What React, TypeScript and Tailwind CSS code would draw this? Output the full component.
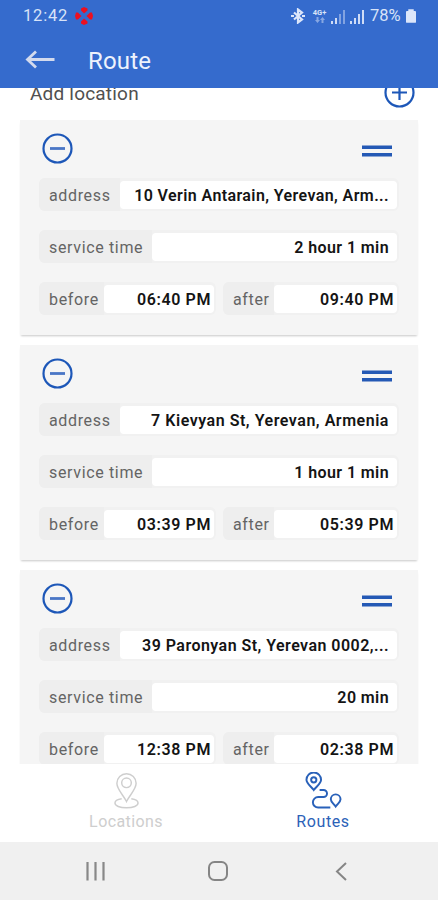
import React from 'react';

const stops = [
  { id: 1, address: '10 Verin Antarain, Yerevan, Arm...', addressTracking: 'tracking-[0.4px]', service: '2 hour 1 min', before: '06:40 PM', after: '09:40 PM' },
  { id: 2, address: '7 Kievyan St, Yerevan, Armenia', addressTracking: 'tracking-[0.53px]', service: '1 hour 1 min', before: '03:39 PM', after: '05:39 PM' },
  { id: 3, address: '39 Paronyan St, Yerevan 0002,...', addressTracking: 'tracking-[0.46px]', service: '20 min', before: '12:38 PM', after: '02:38 PM' },
];

const CircleIcon = ({ plus = false }: { plus?: boolean }) => (
  <svg className="h-[31px] w-[31px] shrink-0" viewBox="0 0 31 31" fill="none" stroke="#1d57b8">
    <circle cx="15.5" cy="15.5" r="14" strokeWidth="2.2" />
    <path d={plus ? 'M8 15.5h15M15.5 8v15' : 'M8 15.5h15'} strokeWidth={plus ? 2.2 : 2.8} stroke={plus ? '#1d57b8' : '#4a76c6'} />
  </svg>
);

type FieldProps = {
  label: string;
  value: string;
  labelWidth: string;
  className?: string;
  inset?: string;
  tracking?: string;
};

const Field = ({ label, value, labelWidth, className = '', inset = 'pr-2', tracking = 'tracking-[0.4px]' }: FieldProps) => (
  <div className={`flex h-[33px] items-center rounded-md bg-[#f1f1f1] pr-0.5 ${className}`}>
    <div className={`flex h-full shrink-0 items-center rounded-l-md bg-[#eeeeee] pt-[3px] pl-2.5 tracking-[0.65px] text-[#646464] ${labelWidth}`}>
      {label}
    </div>
    <div className={`flex h-7 flex-1 items-center justify-end rounded bg-white pt-[3px] font-semibold whitespace-nowrap text-[#141414] ${inset} ${tracking}`}>
      {value}
    </div>
  </div>
);

const SignalIcon = ({ faded = false }: { faded?: boolean }) => (
  <svg className="h-[15px] w-[14px]" viewBox="0 0 14 15" fill="#cfdcf6">
    <path d="M0 12h2v3H0zM4 9h2v6H4z" />
    <path d="M8 5h2v10H8zM12 1h2v14h-2z" opacity={faded ? 0.5 : 1} />
  </svg>
);

const StatusBar = () => (
  <div className="flex h-8 items-center pl-[23px] text-[16.5px] text-[#d8e3f8]">
    <span className="w-[46px] tracking-[0.8px]">12:42</span>
    <svg className="ml-[6px] h-[18px] w-[18px]" viewBox="0 0 18 18" fill="#ed1020">
      <path d="M6 1.500L9 0l3.500 1.500v2L9 6.500l-3-3zM6 16.500L9 18l3.500-1.500v-2L9 11.500l-3 3zM1 5.500h2L6.500 9 3 12.500H1L0 9zM17 5.500h-2L11.500 9l3.500 3.500h2L18 9z" />
    </svg>
    <div className="ml-auto flex items-center pr-[22px]">
      <svg className="h-4 w-[14px]" viewBox="0 0 14 16" fill="none" stroke="#dce6fa" strokeWidth="2.200">
        <path d="M3 4.500l8 7L7 14.500v-13l4 3-8 7" />
        <path d="M0 8h3M11 8h3" />
      </svg>
      <div className="ml-[7px] flex h-[15px] w-[15px] flex-col items-center">
        <span className="text-[7.5px] leading-[8px] font-bold">4G+</span>
        <svg className="h-[6px] w-[10px] opacity-50" viewBox="0 0 10 6" fill="currentColor">
          <path d="M2.500 6L0 3h1.500V0h2v3H5zM7.500 0L10 3H8.500v3h-2V3H5z" />
        </svg>
      </div>
      <div className="ml-1 flex gap-[5px]">
        <SignalIcon faded />
        <SignalIcon />
      </div>
      <span className="ml-[6px] w-[33px]">78%</span>
      <svg className="ml-[3px] h-[14px] w-[10px]" viewBox="0 0 11 15" fill="#dce6fa">
        <path d="M2.500 0h6v2H10a1 1 0 011 1v11a1 1 0 01-1 1H1a1 1 0 01-1-1V3a1 1 0 011-1h1.500z" />
      </svg>
    </div>
  </div>
);

export default function App() {
  return (
    <div className="flex h-[900px] w-[438px] flex-col overflow-hidden bg-white font-[Roboto,sans-serif]">
      {/* Header */}
      <header className="h-[88px] shrink-0 bg-[#356bcd]">
        <StatusBar />
        <div className="flex h-14 items-center pl-[25px]">
          <svg className="h-5 w-[30px]" viewBox="0 0 30 20" fill="none" stroke="#d3daed" strokeWidth="2.800">
            <path d="M29.500 9.500H2M11 1.500l-8.500 8 8.500 8" />
          </svg>
          <h1 className="ml-[33px] pt-px text-2xl tracking-[0.15px] text-[#edf2fc]">Route</h1>
        </div>
      </header>

      {/* Stop list, scrolled slightly under the header */}
      <main className="flex min-h-0 flex-1 flex-col overflow-hidden px-5">
        <div className="-mt-[11px] mb-[12px] flex h-[31px] shrink-0 items-center justify-between pr-[3px] pl-[10px]">
          <span className="pt-[3px] text-[19px] tracking-[0.2px] text-[#505050]">Add location</span>
          <CircleIcon plus />
        </div>
        <div className="flex flex-col gap-2.5">
          {stops.map((stop) => (
            <section
              key={stop.id}
              className="h-[215px] shrink-0 bg-[#f5f5f5] px-[19px] text-base shadow-[0_2px_2px_-1px_rgba(0,0,0,0.22)]"
            >
              <div className="flex h-[58px] items-center justify-between pr-[7px] pb-0.5 pl-[3px]">
                <CircleIcon />
                <svg className="mt-1.5 h-3 w-[30px]" viewBox="0 0 30 12" fill="#2459b5">
                  <path d="M0 0.500h30v3.500H0zM0 8h30v3.500H0z" />
                </svg>
              </div>
              <div className="flex flex-col gap-[19px]">
                <Field label="address" value={stop.address} labelWidth="w-[81px]" tracking={stop.addressTracking} />
                <Field label="service time" value={stop.service} labelWidth="w-[113px]" />
                <div className="flex justify-between">
                  <Field label="before" value={stop.before} labelWidth="w-[65px]" className="w-[177px]" inset="pr-[3px]" tracking="tracking-[0.6px]" />
                  <Field label="after" value={stop.after} labelWidth="w-[51px]" className="w-[176px]" inset="pr-[3px]" tracking="tracking-[0.6px]" />
                </div>
              </div>
            </section>
          ))}
        </div>
      </main>

      {/* Tabs */}
      <nav className="flex h-[78px] shrink-0 justify-center bg-white pl-[11px] text-base tracking-[0.4px]">
        <div className="flex w-[197px] flex-col items-center pt-2 text-[#cecece]">
          <svg className="h-[37px] w-[25px]" viewBox="0 0 26 38" fill="none" stroke="currentColor" strokeWidth="1.500">
            <path d="M13 30.500C10 24 3 18 3 11.500a10 10 0 0120 0C23 18 16 24 13 30.500z" />
            <circle cx="13" cy="11" r="5" />
            <path d="M8 27.500c-4 .5-7 2-7 4.500 0 3 5 5 12 5s12-2 12-5c0-2.500-3-4-7-4.500" />
          </svg>
          <span className="mt-px">Locations</span>
        </div>
        <div className="flex w-[197px] flex-col items-center pt-2 text-[#2c62b8]">
          <svg className="h-[37px] w-[37px]" viewBox="0 0 38 38" fill="none" stroke="#2961b9" strokeWidth="2">
            <path d="M9 18.500C6 14.500 1.500 12 1.500 8a7.500 7.500 0 0115 0c0 4-4.500 6.500-7.500 10.500z" />
            <circle cx="9" cy="8" r="2.700" />
            <path d="M15 18.500h4a3.600 3.600 0 010 7.200h-5.500a5.400 5.400 0 000 10.800H26" />
            <path d="M31.500 35.500c-2-3-5-4.700-5-7.500a5 5 0 0110 0c0 2.800-3 4.500-5 7.500z" />
          </svg>
          <span className="mt-px tracking-[0.6px]">Routes</span>
        </div>
      </nav>

      {/* System navigation */}
      <footer className="flex h-[58px] shrink-0 items-center justify-between bg-[#f0f0f0] pr-[91px] pl-[86px]">
        <svg className="h-[19px] w-[19px]" viewBox="0 0 19 19" fill="none" stroke="#888888" strokeWidth="2.200">
          <path d="M1.500 0v18.500M9.500 0v18.500M17.500 0v18.500" />
        </svg>
        <svg className="mr-1 h-5 w-5" viewBox="0 0 20 20" fill="none" stroke="#858585" strokeWidth="2">
          <rect x="1" y="1" width="18" height="18" rx="5.500" />
        </svg>
        <svg className="h-[19px] w-3" viewBox="0 0 12 19" fill="none" stroke="#858585" strokeWidth="2">
          <path d="M11 1L2 9.500l9 8.500" />
        </svg>
      </footer>
    </div>
  );
}
